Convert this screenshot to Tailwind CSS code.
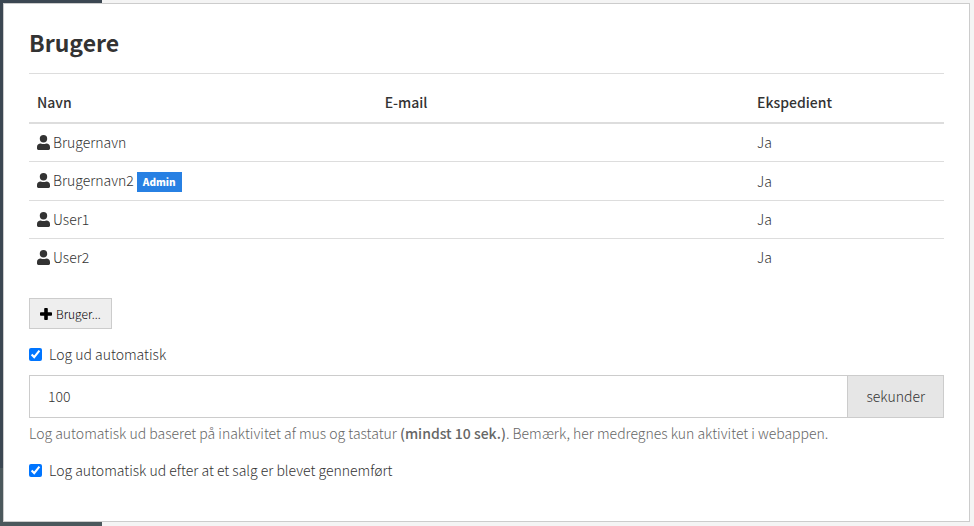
<!DOCTYPE html>
<html lang="da">
<head>
  <meta charset="UTF-8"/>
  <meta name="viewport" content="width=device-width, initial-scale=1.0"/>
  <title>Brugere</title>
  <script src="https://cdn.jsdelivr.net/npm/@tailwindcss/browser@4"></script>
  <style>
    body {
      font-family: 'Noto Sans CJK SC', 'Open Sans', sans-serif;
    }
  </style>
</head>
<body class="grid min-h-screen bg-[#f4f4f4] text-[14px] leading-[21px] font-light text-[#333]">

  <!-- Icons -->
  <svg class="hidden">
    <symbol id="user" viewBox="0 0 13 15">
      <circle cx="6.5" cy="3.7" r="3.7"/>
      <path d="M3.8 8.4C5.4 9.2 7.6 9.2 9.2 8.4C11.6 8.4 13 9.8 13 12V13.6C13 14.4 12.4 15 11.6 15H1.4C.6 15 0 14.4 0 13.6V12C0 9.8 1.4 8.4 3.8 8.4Z"/>
    </symbol>
    <symbol id="plus" viewBox="0 0 12 12">
      <path d="M5 0H7Q7.8 0 7.8 .8V4.2H11.2Q12 4.2 12 5V7Q12 7.8 11.2 7.8H7.8V11.2Q7.8 12 7 12H5Q4.2 12 4.2 11.2V7.8H.8Q0 7.8 0 7V5Q0 4.2 .8 4.2H4.2V.8Q4.2 0 5 0Z"/>
    </symbol>
  </svg>

  <!-- Sidebar behind the panel -->
  <div class="col-start-1 row-start-1 flex w-[102px] flex-col">
    <div class="flex-1 bg-[#3b4752]"></div>
    <div class="h-[58px] bg-[#4b585c]"></div>
  </div>

  <!-- Panel -->
  <main class="col-start-1 row-start-1 mt-[3px] mr-1 mb-1 ml-[3px] border border-[#ccc] bg-white p-[25px]">
    <h1 class="border-b border-[#ddd] pb-[18px] text-[23px] leading-[26px] font-bold">Brugere</h1>

    <table class="mt-[10px] w-full table-fixed border-collapse text-left">
      <thead>
        <tr class="border-b-2 border-[#ddd]">
          <th class="w-[38%] px-2 pt-2 pb-[9px] font-medium">Navn</th>
          <th class="px-2 pt-2 pb-[9px] font-medium">E-mail</th>
          <th class="w-[195px] px-2 pt-2 pb-[9px] font-medium">Ekspedient</th>
        </tr>
      </thead>
      <tbody>
        <tr class="border-b border-[#ddd]">
          <td class="p-2"><div class="flex items-center gap-[3px]"><svg class="h-[15px] w-[13px] fill-current"><use href="#user"/></svg>Brugernavn</div></td>
          <td class="p-2"></td>
          <td class="p-2">Ja</td>
        </tr>
        <tr class="border-b border-[#ddd]">
          <td class="p-2">
            <div class="flex h-[22px] items-start gap-[3px]">
              <svg class="mt-[3px] h-[15px] w-[13px] fill-current"><use href="#user"/></svg>Brugernavn2
              <span class="self-end bg-[#2780e3] px-[6px] text-[10px] leading-5 font-black text-white">Admin</span>
            </div>
          </td>
          <td class="p-2"></td>
          <td class="p-2">Ja</td>
        </tr>
        <tr class="border-b border-[#ddd]">
          <td class="p-2"><div class="flex items-center gap-[3px]"><svg class="h-[15px] w-[13px] fill-current"><use href="#user"/></svg>User1</div></td>
          <td class="p-2"></td>
          <td class="p-2">Ja</td>
        </tr>
        <tr>
          <td class="p-2"><div class="flex items-center gap-[3px]"><svg class="h-[15px] w-[13px] fill-current"><use href="#user"/></svg>User2</div></td>
          <td class="p-2"></td>
          <td class="p-2">Ja</td>
        </tr>
      </tbody>
    </table>

    <button type="button" class="mt-[22px] flex h-[31px] items-center gap-1 border border-[#ccc] bg-[#eee] px-[10px] text-[12px] text-black">
      <svg class="size-3 fill-current"><use href="#plus"/></svg>Bruger...
    </button>

    <div class="mt-[15px] flex items-center gap-[7px]">
      <input id="auto-logout" type="checkbox" checked class="size-[13px]"/>
      <label for="auto-logout">Log ud automatisk</label>
    </div>

    <div class="mt-[10px] flex h-[43px] border border-[#ccc]">
      <input id="seconds" type="text" value="100" aria-labelledby="seconds-unit" class="min-w-0 flex-1 px-[18px] outline-none"/>
      <label id="seconds-unit" for="seconds" class="flex items-center border-l border-[#ccc] bg-[#e6e6e6] px-[18px]">sekunder</label>
    </div>
    <p class="mt-[5px] text-[#666]">Log automatisk ud baseret på inaktivitet af mus og tastatur <b class="font-medium">(mindst 10 sek.)</b>. Bemærk, her medregnes kun aktivitet i webappen.</p>

    <div class="mt-4 flex items-center gap-[7px]">
      <input id="sale-logout" type="checkbox" checked class="size-[13px]"/>
      <label for="sale-logout">Log automatisk ud efter at et salg er blevet gennemført</label>
    </div>
  </main>

</body>
</html>
